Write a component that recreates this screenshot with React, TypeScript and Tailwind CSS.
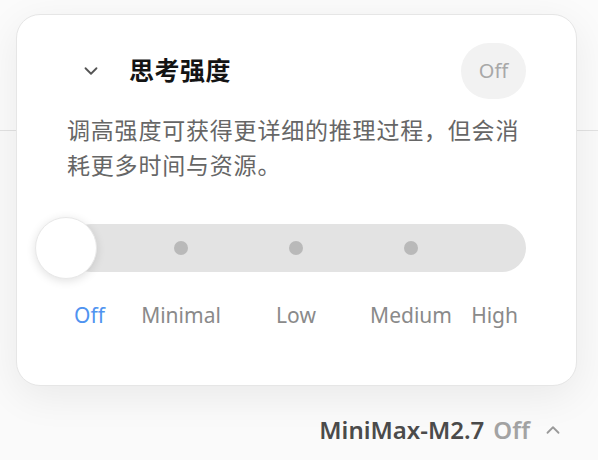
import { ChevronDown, ChevronUp } from 'lucide-react';

const font = "font-['Noto_Sans','Noto_Sans_CJK_SC',sans-serif]";

export default function App() {
  const labels = [
    { name: 'Off', className: 'w-[59px] pl-[7px] text-left text-[#4f93f0]' },
    { name: 'Minimal', className: 'w-[110px] text-center text-[#8a8a8a]' },
    { name: 'Low', className: 'w-[120px] text-center text-[#8a8a8a]' },
    { name: 'Medium', className: 'w-[110px] text-center text-[#8a8a8a]' },
    { name: 'High', className: 'w-[60px] pr-[8px] text-right text-[#8a8a8a]' },
  ];

  return (
    <div className={`relative flex h-[460px] w-[598px] flex-col overflow-hidden bg-[#fafafa] ${font}`}>
      <div className="h-[131px] shrink-0 border-b border-[#e2e2e2] bg-[#fbfbfb]" />
      <div className="flex-1" />
      <div className="flex items-center justify-end pb-[12px] pr-[34px]">
        <span className="text-[24px] font-semibold text-[#4b4b4b]">MiniMax-M2.7</span>
        <span className="ml-[9px] text-[24px] font-semibold text-[#a3a3a3]">Off</span>
        <ChevronUp className="ml-[12px] h-[22px] w-[22px] text-[#9a9a9a]" strokeWidth={2} />
      </div>

      {/* popover */}
      <div className="absolute left-[16px] top-[14px] h-[372px] w-[561px] rounded-[24px] border border-[#e6e6e6] bg-white px-[50px] pt-[28px] shadow-[0_10px_40px_rgba(0,0,0,0.07)]">
        <div className="flex h-[56px] items-center justify-between">
          <div className="flex items-center">
            <ChevronDown className="ml-[13px] h-[22px] w-[22px] text-[#555]" strokeWidth={2} />
            <span className="ml-[27px] text-[25px] font-bold tracking-[0.5px] text-[#141414]">思考强度</span>
          </div>
          <div className="flex h-[56px] w-[65px] items-center justify-center rounded-full bg-[#f2f2f2] text-[20px] text-[#a8a8a8]">
            Off
          </div>
        </div>

        <p className="mt-[14px] text-[23px] leading-[35px] tracking-[0.8px] text-[#666]">
          调高强度可获得更详细的推理过程，但会消耗更多时间与资源。
        </p>

        <div className="relative mt-[34px] flex h-[62px] items-center">
          <div className="flex h-[48px] w-full items-center gap-[101px] rounded-full bg-[#e3e3e3] pl-[107px]">
            <span className="h-[14px] w-[14px] rounded-full bg-[#b9b9b9]" />
            <span className="h-[14px] w-[14px] rounded-full bg-[#b9b9b9]" />
            <span className="h-[14px] w-[14px] rounded-full bg-[#b9b9b9]" />
          </div>
          <div className="absolute left-[-32px] top-0 h-[62px] w-[62px] rounded-full border border-[#e8e8e8] bg-white shadow-[0_2px_10px_rgba(0,0,0,0.12)]" />
        </div>

        <div className="mt-[22px] flex text-[21px] leading-[28px]">
          {labels.map((l) => (
            <span key={l.name} className={l.className}>
              {l.name}
            </span>
          ))}
        </div>
      </div>
    </div>
  );
}
